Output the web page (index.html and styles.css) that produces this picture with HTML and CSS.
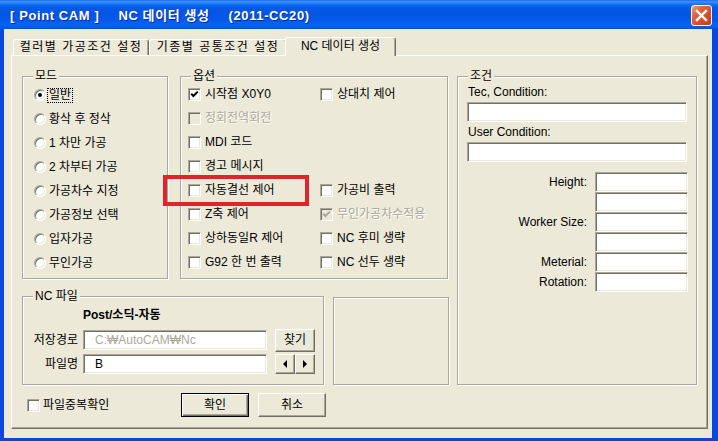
FILE: index.html
```html
<!DOCTYPE html>
<html lang="ko">
<head>
  <meta charset="UTF-8" />
  <title>[ Point CAM ] NC 데이터 생성</title>
  <link rel="stylesheet" href="styles.css">
</head>
<body>

<div class="window">
  <div class="titlebar">
    <div class="title">
      <span>[ Point CAM ]</span>
      <span>NC 데이터 생성</span>
      <span>(2011-CC20)</span>
    </div>
    <button class="close" title="닫기">
      <svg width="19" height="19" viewBox="0 0 19 19"><path d="M5 5 L14 14 M14 5 L5 14" stroke="#fff" stroke-width="2.4" stroke-linecap="square"/></svg>
    </button>
  </div>

  <div class="client">
    <div class="tabs">
      <div class="tab tab-1">컬러별 가공조건 설정</div>
      <div class="tab tab-2">기종별 공통조건 설정</div>
      <div class="tab tab-3 active">NC 데이터 생성</div>
    </div>

    <div class="panel">
      <div class="left">
        <div class="top-row">
          <div class="group mode">
            <span class="legend">모드</span>
            <div class="opt"><span class="radio on"></span><span class="txt focus">일반</span></div>
            <div class="opt"><span class="radio"></span><span class="txt">황삭 후 정삭</span></div>
            <div class="opt"><span class="radio"></span><span class="txt">1 차만 가공</span></div>
            <div class="opt"><span class="radio"></span><span class="txt">2 차부터 가공</span></div>
            <div class="opt"><span class="radio"></span><span class="txt">가공차수 지정</span></div>
            <div class="opt"><span class="radio"></span><span class="txt">가공정보 선택</span></div>
            <div class="opt"><span class="radio"></span><span class="txt">입자가공</span></div>
            <div class="opt"><span class="radio"></span><span class="txt">무인가공</span></div>
          </div>

          <div class="group options">
            <span class="legend">옵션</span>
            <div class="opt-grid">
              <div class="opt"><span class="check"><svg width="9" height="9" viewBox="0 0 9 9"><path d="M1.2 3.8 L3.4 6 L7.8 1.6" stroke="#000" stroke-width="2" fill="none"/></svg></span>시작점 X0Y0</div>
              <div class="opt"><span class="check"></span>상대치 제어</div>
              <div class="opt disabled"><span class="check"></span>정회전역회전</div>
              <div></div>
              <div class="opt"><span class="check"></span>MDI 코드</div>
              <div></div>
              <div class="opt"><span class="check"></span>경고 메시지</div>
              <div></div>
              <div class="opt marked"><span class="check"></span>자동결선 제어<span class="mark"></span></div>
              <div class="opt"><span class="check"></span>가공비 출력</div>
              <div class="opt"><span class="check"></span>Z축 제어</div>
              <div class="opt disabled"><span class="check"><svg width="9" height="9" viewBox="0 0 9 9"><path d="M1.2 3.8 L3.4 6 L7.8 1.6" stroke="#aca899" stroke-width="2" fill="none"/></svg></span>무인가공차수적용</div>
              <div class="opt"><span class="check"></span>상하동일R 제어</div>
              <div class="opt"><span class="check"></span>NC 후미 생략</div>
              <div class="opt"><span class="check"></span>G92 한 번 출력</div>
              <div class="opt"><span class="check"></span>NC 선두 생략</div>
            </div>
          </div>
        </div>

        <div class="mid-row">
          <div class="group ncfile">
            <span class="legend">NC 파일</span>
            <div class="post">Post/소딕-자동</div>
            <div class="row">
              <span class="lbl">저장경로</span>
              <div class="edit path">C:₩AutoCAM₩Nc</div>
              <button class="btn find">찾기</button>
            </div>
            <div class="row">
              <span class="lbl">파일명</span>
              <div class="edit name">B</div>
              <button class="btn arrow"><span class="tri-left"></span></button>
              <button class="btn arrow"><span class="tri-right"></span></button>
            </div>
          </div>
          <div class="group blank"></div>
        </div>

        <div class="bottom-row">
          <div class="opt dup"><span class="check"></span>파일중복확인</div>
          <button class="btn push default">확인</button>
          <button class="btn push">취소</button>
        </div>
      </div>

      <div class="group cond">
        <span class="legend">조건</span>
        <div class="cond-label">Tec, Condition:</div>
        <div class="edit wide"></div>
        <div class="cond-label">User Condition:</div>
        <div class="edit wide"></div>
        <div class="cond-grid">
          <span>Height:</span><div class="edit"></div>
          <span></span><div class="edit"></div>
          <span>Worker Size:</span><div class="edit"></div>
          <span></span><div class="edit"></div>
          <span>Meterial:</span><div class="edit"></div>
          <span>Rotation:</span><div class="edit"></div>
        </div>
      </div>
    </div>
  </div>
</div>

</body>
</html>
```

FILE: styles.css
```css
body {
  margin: 0;
  font: 12px/16px "Liberation Sans", "Noto Sans CJK KR", sans-serif;
  color: #000;
  background: #fff;
}

.window {
  width: 718px;
  height: 441px;
  display: flex;
  flex-direction: column;
  background: #0a48dc;
  overflow: hidden;
}

/* Title bar */
.titlebar {
  height: 29px;
  flex: none;
  display: flex;
  align-items: flex-start;
  justify-content: space-between;
  padding: 5px 6px 0 10px;
  box-sizing: border-box;
  background: linear-gradient(to bottom, #0a5ce6 0px, #3d8ef9 1px, #2a84fa 3px, #0c6bf6 5px, #0459e6 8px, #0355e4 14px, #0458ea 20px, #0662f5 24px, #0560f2 26px, #0450dc 29px);
}

.title {
  display: flex;
  gap: 19px;
  color: #fff;
  font-weight: bold;
  font-size: 13px;
  line-height: 21px;
  letter-spacing: 0.6px;
  white-space: pre;
  text-shadow: 1px 1px 0 #0a2a9a;
}

.close {
  width: 21px;
  height: 21px;
  padding: 0;
  border: 1px solid #fff;
  border-radius: 3px;
  background: linear-gradient(135deg, #f0a282 0%, #e2643c 30%, #d24a22 70%, #c23c17 100%);
  display: flex;
  align-items: center;
  justify-content: center;
}

/* Client area */
.client {
  flex: 1;
  margin: 0 6px 3px 4px;
  background: #ece9d8;
  display: flex;
  flex-direction: column;
}

.tabs {
  height: 26px;
  flex: none;
  display: flex;
  align-items: flex-end;
  padding-left: 9px;
}

.tab {
  box-sizing: border-box;
  height: 16px;
  border: 1px solid;
  border-color: #fff #716f64 transparent #fff;
  border-bottom: none;
  border-radius: 3px 3px 0 0;
  box-shadow: inset -1px 0 #aca899;
  text-align: center;
  line-height: 15px;
  letter-spacing: 1.5px;
}

.tab-1 { width: 136px; }
.tab-2 { width: 138px; }

.tab.active {
  width: 111px;
  height: 19px;
  margin-left: -2px;
  margin-bottom: -1px;
  position: relative;
  z-index: 1;
  background: #ece9d8;
  letter-spacing: 0;
  line-height: 16px;
}

.panel {
  box-sizing: border-box;
  margin-left: 7px;
  width: 697px;
  height: 374px;
  border: 1px solid;
  border-color: #fff #716f64 #716f64 #fff;
  box-shadow: inset -1px -1px #aca899;
  padding: 20px 0 0 10px;
  display: grid;
  grid-template-columns: 427px 240px;
  column-gap: 8px;
  align-items: start;
}

.left {
  display: flex;
  flex-direction: column;
}

/* Group boxes */
.group {
  position: relative;
  box-sizing: border-box;
  border: 1px solid #aca899;
  box-shadow: inset 1px 1px #fff, 1px 1px #fff;
}

.legend {
  position: absolute;
  top: -9px;
  left: 10px;
  padding: 0 2px;
  background: #ece9d8;
}

.top-row {
  display: flex;
  gap: 12px;
  height: 203px;
}

.mode {
  width: 146px;
  padding: 6px 0 0 11px;
}

.options {
  width: 268px;
  padding: 5px 0 0 7px;
}

.opt-grid {
  display: grid;
  grid-template-columns: 132px auto;
  grid-auto-rows: 24px;
}

.opt {
  display: flex;
  align-items: center;
  height: 24px;
  gap: 4px;
  white-space: nowrap;
}

.mode .opt {
  gap: 1px;
}

.opt.disabled {
  color: #aca899;
  text-shadow: 1px 1px 0 #fff;
}

.opt.marked {
  position: relative;
}

.mark {
  position: absolute;
  left: -25px;
  top: -3px;
  width: 146px;
  height: 31px;
  box-sizing: border-box;
  border: 4px solid #e4222a;
  pointer-events: none;
}

.txt {
  padding: 0 1px;
  border: 1px solid transparent;
  line-height: 13px;
}

.txt.focus {
  border: 1px dotted #000;
}

/* Classic controls */
.radio {
  position: relative;
  flex: none;
  width: 12px;
  height: 12px;
  box-sizing: border-box;
  border-radius: 50%;
  border: 1px solid;
  border-color: #aca899 #fff #fff #aca899;
  box-shadow: inset 1px 1px #716f64, inset -1px -1px #ece9d8;
  background: #fff;
}

.radio.on::after {
  content: "";
  position: absolute;
  left: 3px;
  top: 3px;
  width: 4px;
  height: 4px;
  border-radius: 50%;
  background: #000;
}

.check {
  flex: none;
  width: 13px;
  height: 13px;
  box-sizing: border-box;
  border: 1px solid;
  border-color: #aca899 #fff #fff #aca899;
  box-shadow: inset 1px 1px #716f64, inset -1px -1px #ece9d8;
  background: #fff;
  display: flex;
  align-items: center;
  justify-content: center;
}

.disabled .check {
  background: #ece9d8;
}

.edit {
  box-sizing: border-box;
  height: 20px;
  border: 1px solid;
  border-color: #aca899 #fff #fff #aca899;
  box-shadow: inset 1px 1px #716f64, inset -1px -1px #ece9d8;
  background: #fff;
  line-height: 18px;
  white-space: nowrap;
}

.btn {
  box-sizing: border-box;
  padding: 0;
  font: inherit;
  color: #000;
  background: #ece9d8;
  border: 1px solid;
  border-color: #fff #716f64 #716f64 #fff;
  box-shadow: inset -1px -1px #aca899;
}

/* NC file */
.mid-row {
  display: flex;
  gap: 9px;
  margin-top: 17px;
  height: 89px;
}

.ncfile {
  width: 302px;
  padding-top: 10px;
}

.post {
  margin-left: 60px;
  font-weight: bold;
  height: 16px;
  margin-bottom: 5px;
}

.row {
  display: flex;
  align-items: center;
  height: 24px;
}

.lbl {
  width: 55px;
  text-align: right;
}

.row .edit {
  width: 184px;
  margin-left: 5px;
  padding-left: 11px;
}

.edit.path {
  color: #aca899;
}

.find {
  width: 40px;
  height: 23px;
  margin-left: 8px;
}

.arrow {
  width: 20px;
  height: 20px;
  display: flex;
  align-items: center;
  justify-content: center;
}

.arrow:first-of-type {
  margin-left: 8px;
}

.tri-left {
  border-top: 4px solid transparent;
  border-bottom: 4px solid transparent;
  border-right: 4px solid #000;
}

.tri-right {
  border-top: 4px solid transparent;
  border-bottom: 4px solid transparent;
  border-left: 4px solid #000;
}

.blank {
  width: 116px;
  height: 88px;
  margin-top: 1px;
}

.bottom-row {
  margin-top: 8px;
  height: 24px;
  display: flex;
  align-items: center;
  padding-left: 5px;
}

.opt.dup {
  width: 154px;
  gap: 3px;
}

.push {
  width: 68px;
  height: 24px;
  margin-right: 9px;
}

.push.default {
  border: 1px solid #000;
  box-shadow: inset 1px 1px #fff, inset -1px -1px #716f64, inset -2px -2px #aca899;
}

/* Conditions */
.cond {
  width: 240px;
  height: 309px;
  padding: 7px 8px 0 9px;
}

.cond-label {
  padding-left: 1px;
  height: 16px;
}

.edit.wide {
  width: 220px;
  margin: 2px 0;
}

.cond-grid {
  margin-top: 10px;
  display: grid;
  grid-template-columns: 120px 93px;
  column-gap: 8px;
  grid-auto-rows: 20px;
}

.cond-grid span {
  text-align: right;
  line-height: 20px;
}
```
